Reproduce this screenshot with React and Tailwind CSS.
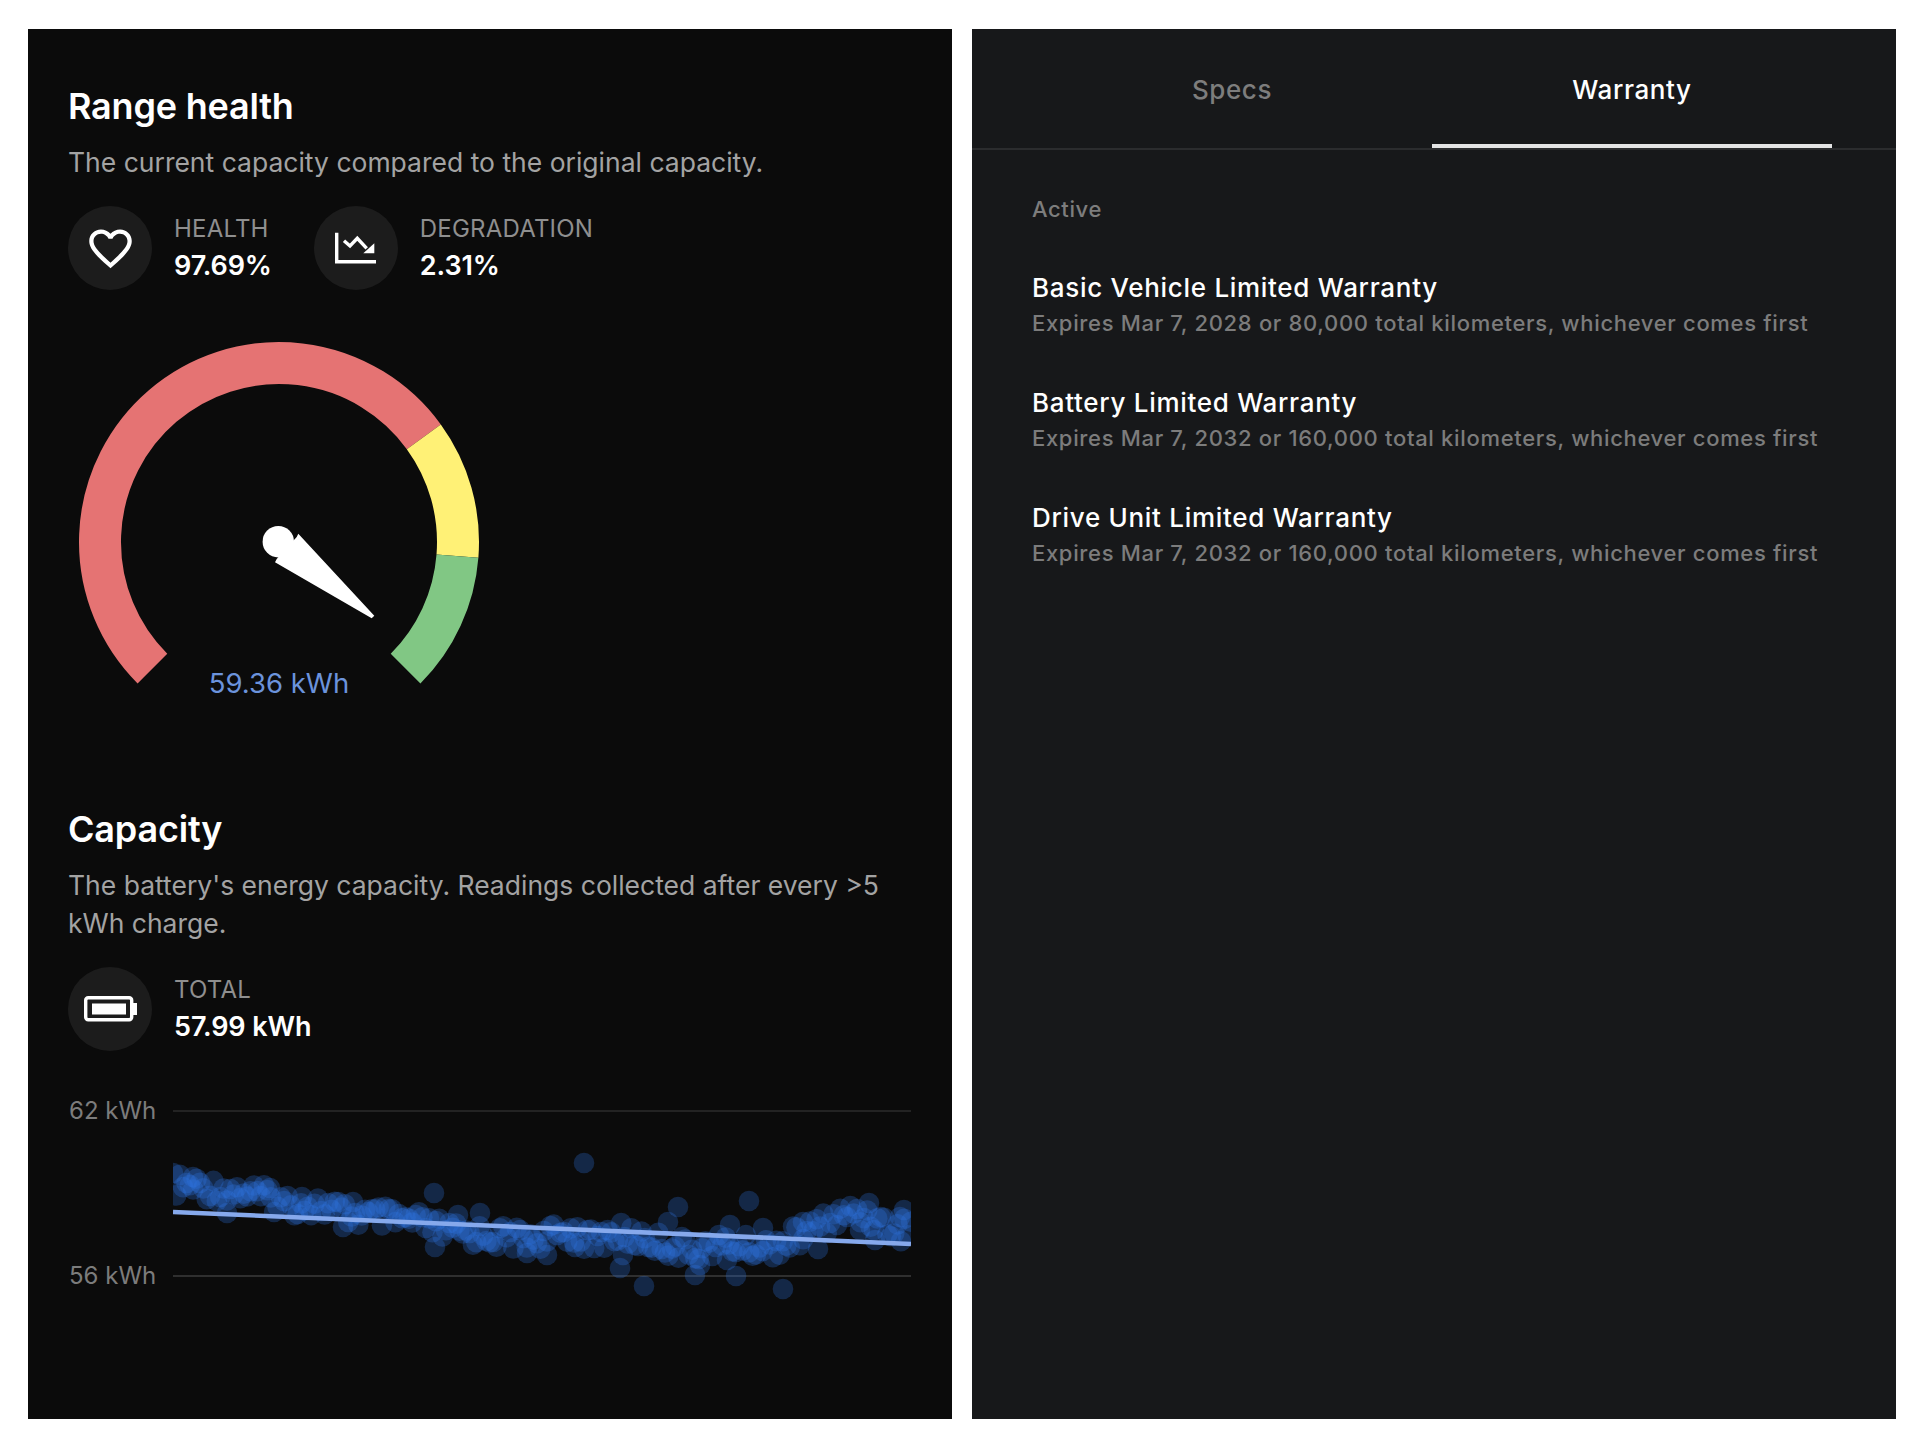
import { MdFavoriteBorder } from 'react-icons/md';

const FONT = "font-['Inter','Liberation_Sans',sans-serif]";

// gauge geometry, measured off the picture
const CX = 211;
const CY = 211;
const polar = (r, deg) => {
  const a = (deg * Math.PI) / 180;
  return [CX + r * Math.cos(a), CY - r * Math.sin(a)];
};
const arcPath = (from, to) => {
  const [x1, y1] = polar(179, from);
  const [x2, y2] = polar(179, to);
  const large = from - to > 180 ? 1 : 0;
  return `M ${x1} ${y1} A 179 179 0 ${large} 1 ${x2} ${y2}`;
};

const Gauge = () => (
  <div className="relative w-[422px] h-[400px] mt-[41px]">
    <svg width="422" height="400" viewBox="0 0 422 400">
      <path d={arcPath(225, 36)} fill="none" stroke="#e57373" strokeWidth="42" />
      <path d={arcPath(36, -4.5)} fill="none" stroke="#fff176" strokeWidth="42" />
      <path d={arcPath(-4.5, -45)} fill="none" stroke="#81c784" strokeWidth="42" />
      <circle cx="210.3" cy="210.7" r="15.7" fill="#fff" />
      <polygon
        points="230.3,202.7 228.7,206 208.7,228 207,231.3 303.7,287.3 306.3,284.7"
        fill="#fff"
      />
    </svg>
    <div className="absolute left-0 right-0 top-[335px] text-center text-[27.5px] leading-[34px] text-[#6b93dc]">
      59.36 kWh
    </div>
  </div>
);

const IconCircle = ({ children }) => (
  <div className="w-[84px] h-[84px] rounded-full bg-[#1c1c1c] flex items-center justify-center shrink-0">
    {children}
  </div>
);

const TrendIcon = () => (
  <svg width="44" height="34" viewBox="0 0 44 34" fill="none">
    <path d="M2.7 1.7 V30.7 H42" stroke="#fff" strokeWidth="3.4" />
    <path d="M10 9.7 L16 15 L23.3 7.3 L32.7 17.3" stroke="#fff" strokeWidth="3.4" />
    <path d="M40.3 22.3 V12.3 L29.3 22.3 Z" fill="#fff" />
  </svg>
);

const BatteryIcon = () => (
  <svg width="54" height="26" viewBox="0 0 54 26" fill="none" className="ml-[1px]">
    <rect x="1.7" y="1.7" width="46" height="22" rx="2.5" stroke="#fff" strokeWidth="3.4" />
    <rect x="8" y="7.5" width="34" height="11" fill="#fff" />
    <rect x="49" y="7" width="4" height="12" fill="#fff" />
  </svg>
);

const Stat = ({ icon, label, value }) => (
  <div className="flex items-center gap-[22px]">
    <IconCircle>{icon}</IconCircle>
    <div className="flex flex-col gap-[3px]">
      <div className="text-[24px] leading-[32px] text-[#8f8f8f] tracking-[0.2px]">{label}</div>
      <div className="text-[27px] leading-[36px] font-semibold text-white tracking-[-0.1px]">{value}</div>
    </div>
  </div>
);

// readings: middle of the scatter at each x, in chart coordinates
const TREND = [
  [0, 75], [27, 77], [77, 83], [110, 93], [144, 95], [177, 105], [210, 108], [244, 113], [277, 123],
  [310, 125], [340, 128], [374, 128], [400, 120], [420, 133], [440, 123], [474, 130], [514, 140],
  [547, 135], [594, 138], [624, 127], [657, 110], [684, 102], [704, 110], [722, 122], [738, 115],
];
const OUTLIERS = [
  [411, 53], [576, 91], [505, 97], [495, 112], [450, 145], [447, 158], [471, 176], [522, 165],
  [527, 155], [563, 166], [610, 179], [554, 150], [696, 93], [731, 100], [727, 107], [645, 139],
  [702, 130], [687, 120], [630, 112], [590, 118], [557, 115], [374, 145], [354, 143], [402, 137],
  [261, 83], [97, 78], [54, 103], [170, 117], [262, 137], [20, 67], [180, 92], [129, 87], [307, 103], [285, 105],
];
const interpolate = (x) => {
  for (let i = 1; i < TREND.length; i++) {
    if (x <= TREND[i][0]) {
      const [x0, y0] = TREND[i - 1];
      const [x1, y1] = TREND[i];
      return y0 + ((x - x0) / (x1 - x0)) * (y1 - y0);
    }
  }
  return TREND[TREND.length - 1][1];
};
const DOTS = [];
for (let i = 0; i < 220; i++) {
  const x = (i / 219) * 738;
  const noise = Math.sin(i * 12.9898) * 43758.5453;
  const jitter = (noise - Math.floor(noise) - 0.5) * 24;
  DOTS.push([x, interpolate(x) + jitter]);
}

const Chart = () => (
  <div className="flex mt-[59px]">
    <div className="w-[105px] h-[200px] pl-[1px] flex flex-col gap-[131px] text-[24px] leading-[34px] text-[#7c7c7c] mt-[-16px]">
      <div>62 kWh</div>
      <div>56 kWh</div>
    </div>
    <svg width="738" height="200" viewBox="0 0 738 200" className="block">
      <line x1="0" y1="1" x2="738" y2="1" stroke="#232323" strokeWidth="2" />
      <line x1="0" y1="166" x2="738" y2="166" stroke="#2f2f2f" strokeWidth="2" />
      {DOTS.map(([x, y], i) => (
        <circle key={i} cx={x} cy={y} r="10.3" fill="#2f78e6" fillOpacity="0.28" />
      ))}
      {OUTLIERS.map(([x, y], i) => (
        <circle key={i} cx={x} cy={y} r="10.3" fill="#2f78e6" fillOpacity="0.28" />
      ))}
      <line x1="0" y1="102" x2="738" y2="134" stroke="#86a9ec" strokeWidth="4.5" />
    </svg>
  </div>
);

const warranties = [
  ['Basic Vehicle Limited Warranty', 'Expires Mar 7, 2028 or 80,000 total kilometers, whichever comes first'],
  ['Battery Limited Warranty', 'Expires Mar 7, 2032 or 160,000 total kilometers, whichever comes first'],
  ['Drive Unit Limited Warranty', 'Expires Mar 7, 2032 or 160,000 total kilometers, whichever comes first'],
];

export default function App() {
  return (
    <div className={`w-[1920px] h-[1441px] bg-white pt-[29px] pl-[28px] flex gap-[20px] ${FONT}`}>
      {/* Range health + capacity */}
      <div className="w-[924px] h-[1390px] bg-[#0b0b0b] pl-[40px] pt-[55px]">
        <h2 className="text-[36px] leading-[44px] font-semibold text-white tracking-[-0.2px]">Range health</h2>
        <p className="mt-[15px] text-[26.5px] leading-[38px] text-[#a3a3a3]">
          The current capacity compared to the original capacity.
        </p>
        <div className="flex gap-[42px] mt-[25px]">
          <Stat icon={<MdFavoriteBorder size={51} color="#fff" />} label="HEALTH" value="97.69%" />
          <Stat icon={<TrendIcon />} label="DEGRADATION" value="2.31%" />
        </div>
        <Gauge />
        <h2 className="mt-[76px] text-[36px] leading-[44px] font-semibold text-white tracking-[-0.2px]">Capacity</h2>
        <p className="mt-[15px] w-[840px] text-[26.5px] leading-[38px] text-[#a3a3a3]">
          The battery's energy capacity. Readings collected after every &gt;5 kWh charge.
        </p>
        <div className="mt-[25px]">
          <Stat icon={<BatteryIcon />} label="TOTAL" value="57.99 kWh" />
        </div>
        <Chart />
      </div>

      {/* Specs / Warranty tabs */}
      <div className="w-[924px] h-[1390px] bg-[#17181a]">
        <div className="h-[121px] border-b-2 border-[#2b2c2e] pl-[60px] flex">
          <div className="w-[400px] pt-[43px] text-center text-[26px] leading-[36px] font-medium text-[#7d7d7d] tracking-[0.6px]">
            Specs
          </div>
          <div className="w-[400px] h-[119px] pt-[43px] text-center text-[26px] leading-[36px] font-medium text-white tracking-[0.6px] border-b-4 border-[#e4e4e4]">
            Warranty
          </div>
        </div>
        <div className="pl-[60px] pt-[44px]">
          <div className="text-[22px] leading-[30px] font-medium text-[#7d7d7d] tracking-[0.6px]">Active</div>
          <div className="mt-[46px] flex flex-col gap-[45px]">
            {warranties.map(([title, detail]) => (
              <div key={title}>
                <div className="text-[26px] leading-[36px] font-medium text-white tracking-[0.7px]">{title}</div>
                <div className="text-[22px] leading-[34px] font-medium text-[#7c7c7c] tracking-[0.67px]">{detail}</div>
              </div>
            ))}
          </div>
        </div>
      </div>
    </div>
  );
}
